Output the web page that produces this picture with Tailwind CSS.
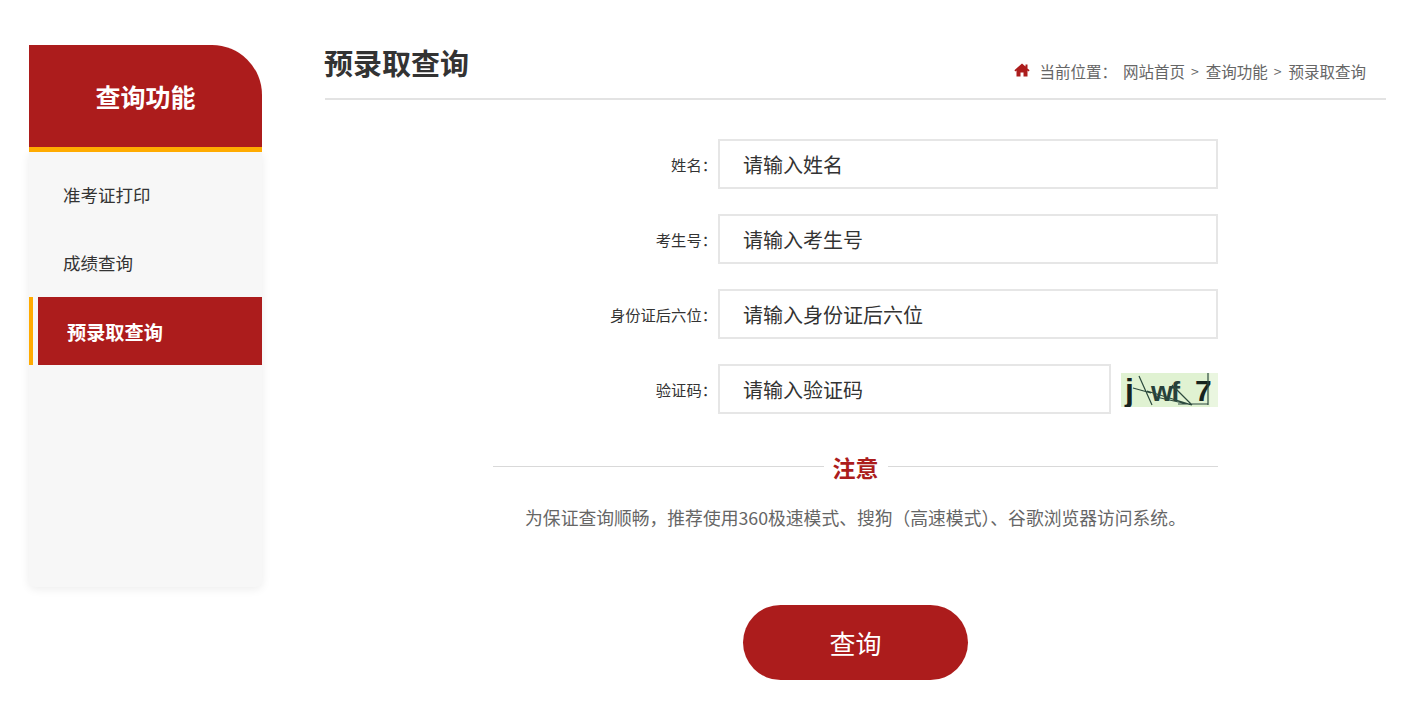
<!DOCTYPE html>
<html lang="zh-CN">
<head>
  <meta charset="UTF-8" />
  <meta name="viewport" content="width=device-width, initial-scale=1.0"/>
  <title>预录取查询</title>
  <script src="https://cdn.jsdelivr.net/npm/@tailwindcss/browser@4"></script>
</head>
<body class="bg-white font-['Noto_Sans_CJK_SC','Liberation_Sans',sans-serif] text-[#333]">
  <div class="flex items-start pl-[29px] pr-5 pt-[45px] h-[716px] overflow-hidden">

    <!-- sidebar -->
    <aside class="w-[233px] shrink-0">
      <div class="relative z-10 h-[107px] pt-[2px] bg-[#ac1c1c] border-b-[5px] border-[#ffab00] rounded-tr-[50px] flex items-center justify-center text-white text-[25px] font-bold">查询功能</div>
      <ul class="h-[435px] pt-[9px] bg-[#f7f7f7] rounded-b-md shadow-[0_2px_10px_rgba(0,0,0,0.08)]">
        <li class="h-[68px] flex items-center pl-[34px] text-[17.5px] text-[#333]">准考证打印</li>
        <li class="h-[68px] flex items-center pl-[34px] text-[17.5px] text-[#333]">成绩查询</li>
        <li class="h-[68px] flex items-center pl-[29px] pt-[2px] ml-[9px] bg-[#ac1c1c] relative text-[19.2px] font-bold text-white">
          <span class="absolute left-[-9px] top-0 bottom-0 w-1 bg-[#ffab00]"></span>预录取查询
        </li>
      </ul>
    </aside>

    <!-- main -->
    <main class="ml-[63px] flex-1">
      <div class="h-[55px] border-b-2 border-[#e3e3e3] flex justify-between items-start">
        <h1 class="text-[29px] leading-[38px] -mt-[2px] -ml-px font-bold text-[#333]">预录取查询</h1>
        <div class="flex items-center pt-[14px] pr-5 text-[15.5px] leading-6 text-[#666]">
          <svg class="w-4 h-4 mr-[9px] mb-[3px]" viewBox="0 0 16 16"><path fill="#ac1c1c" d="M8 1.5 0.4 8.3l1 1.1L2.5 8.4V14.5h4v-4h3v4h4V8.4l1.1 1 1-1.1-2.1-1.9V2.5h-2v2.1z"/></svg>
          <span>当前位置：</span>
          <span class="ml-[6px]">网站首页</span>
          <span class="ml-[6px] mr-[7px] text-[14px]">&gt;</span>
          <span>查询功能</span>
          <span class="ml-[6px] mr-[7px] text-[14px]">&gt;</span>
          <span>预录取查询</span>
        </div>
      </div>

      <form class="w-[725px] mx-auto pt-[39px]">
        <div class="flex flex-col gap-[25px]">
          <div class="flex items-center h-[50px]">
            <label class="w-[224px] mr-[1px] pt-px text-right text-[15.3px] text-[#333]">姓名：</label>
            <input class="w-[500px] h-[50px] border-2 border-[#e6e6e6] pl-[23px] text-[20px] text-[#333] placeholder:text-[#333] outline-none" placeholder="请输入姓名" />
          </div>
          <div class="flex items-center h-[50px]">
            <label class="w-[224px] mr-[1px] pt-px text-right text-[15.3px] text-[#333]">考生号：</label>
            <input class="w-[500px] h-[50px] border-2 border-[#e6e6e6] pl-[23px] text-[20px] text-[#333] placeholder:text-[#333] outline-none" placeholder="请输入考生号" />
          </div>
          <div class="flex items-center h-[50px]">
            <label class="w-[224px] mr-[1px] pt-px text-right text-[15.3px] text-[#333]">身份证后六位：</label>
            <input class="w-[500px] h-[50px] border-2 border-[#e6e6e6] pl-[23px] text-[20px] text-[#333] placeholder:text-[#333] outline-none" placeholder="请输入身份证后六位" />
          </div>
          <div class="flex items-center h-[50px]">
            <label class="w-[224px] mr-[1px] pt-px text-right text-[15.3px] text-[#333]">验证码：</label>
            <input class="w-[393px] h-[50px] border-2 border-[#e6e6e6] pl-[23px] text-[20px] text-[#333] placeholder:text-[#333] outline-none" placeholder="请输入验证码" />
            <svg class="ml-[10px] mt-[1px]" width="97" height="34" viewBox="0 0 97 34">
              <rect width="97" height="34" fill="#e0f2d2"/>
              <rect x="89" width="8" height="34" fill="#eaf6e0"/>
              <text x="4" y="28" font-family="Liberation Sans" font-size="32" font-weight="bold" fill="#16231e">j</text>
              <text x="30" y="28" font-family="Liberation Sans" font-size="28" font-weight="bold" letter-spacing="-2" fill="#27403a">wf</text>
              <text x="74" y="28" font-family="Liberation Sans" font-size="30" font-weight="bold" fill="#16231e">7</text>
              <path d="M18 3l13 29M12 15l18 5M26 18l45 14M35 24l36 8M51 12l20 20M57 31h30M87 0v32" fill="none" stroke="#2c4a3e" stroke-width="1.2"/>
            </svg>
          </div>
        </div>

        <div class="flex items-center mt-[37px]">
          <span class="flex-1 h-px bg-[#d9d9d9]"></span>
          <span class="px-[9px] text-[23px] leading-[28px] mt-[2px] font-bold text-[#ac1c1c]">注意</span>
          <span class="flex-1 h-px bg-[#d9d9d9]"></span>
        </div>
        <p class="mt-[22px] text-center text-[17.8px] leading-7 text-[#666]">为保证查询顺畅，推荐使用360极速模式、搜狗（高速模式）、谷歌浏览器访问系统。</p>

        <button type="button" class="block mx-auto mt-[74px] w-[225px] h-[75px] rounded-full bg-[#ac1c1c] text-white text-[26px]">查询</button>
      </form>
    </main>
  </div>
</body>
</html>
